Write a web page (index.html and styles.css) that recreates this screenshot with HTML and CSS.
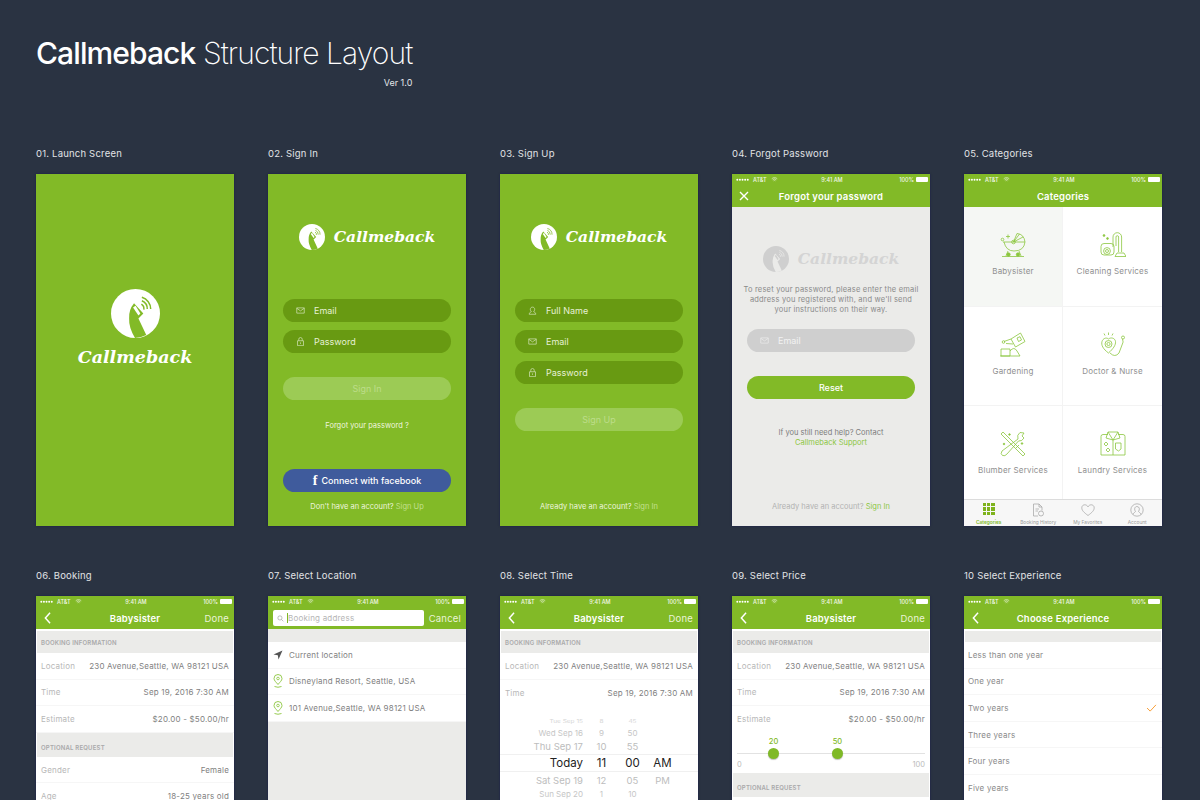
FILE: index.html
```html
<!DOCTYPE html>
<html lang="en">
<head>
  <meta charset="UTF-8" />
  <title>Callmeback Structure Layout</title>
  <link rel="stylesheet" href="styles.css">
</head>
<body>
  <svg class="sprites" width="0" height="0" aria-hidden="true">
    <symbol id="logo" viewBox="0 0 100 100">
      <circle cx="50" cy="50" r="50" fill="currentColor"/>
      <path class="cut" d="M47 29 L66 50 L56 60 L72 94 Q60 100 49 100 Q36 78 37 60 Q36 42 47 29Z"/>
      <path d="M45 38 L50 34 L60 50 L56 54Z" fill="currentColor"/>
      <path class="cut-line" d="M62 31 A11 11 0 0 1 67 42 M63 24 A18 18 0 0 1 74 41 M63 17 A25 25 0 0 1 81 41"/>
    </symbol>
    <symbol id="mail" viewBox="0 0 12 10">
      <path d="M1 1.5h10v7H1zM1 2l5 3.5L11 2" fill="none" stroke="currentColor" stroke-width=".9"/>
    </symbol>
    <symbol id="lock" viewBox="0 0 10 12">
      <path d="M1 5h8v6.500H1zM2.700 5V3a2.300 2.300 0 0 1 4.600 0v2M5 7.200v2" fill="none" stroke="currentColor" stroke-width=".9"/>
    </symbol>
    <symbol id="user" viewBox="0 0 12 12">
      <path d="M1.500 11c.5-2.500 2-3 3-3.500-2.500-2.500-1.500-6 1.500-6s4 3.500 1.500 6c1 .5 2.500 1 3 3.500z" fill="none" stroke="currentColor" stroke-width=".9"/>
    </symbol>
    <symbol id="back" viewBox="0 0 8 14">
      <path d="M7 1 L1.500 7 L7 13" fill="none" stroke="currentColor" stroke-width="1.700"/>
    </symbol>
    <symbol id="wifi" viewBox="0 0 12 9">
      <path d="M1 3.200a7 7 0 0 1 10 0M2.700 5a4.600 4.600 0 0 1 6.600 0M4.400 6.800a2.200 2.200 0 0 1 3.200 0" fill="none" stroke="currentColor" stroke-width="1"/>
    </symbol>
    <symbol id="pin" viewBox="0 0 10 14">
      <path d="M5 10.500C3 8 1 6.500 1 4.500a4 4 0 0 1 8 0C9 6.500 7 8 5 10.500zM1.500 12.500q3.500 1.500 7 0" fill="none" stroke="#8cc63f" stroke-width=".9"/>
      <circle cx="5" cy="4.500" r="1.300" fill="none" stroke="#8cc63f" stroke-width=".8"/>
    </symbol>
    <symbol id="status" viewBox="0 0 26 5">
      <g fill="currentColor"><circle cx="2" cy="2.500" r="1.500"/><circle cx="6" cy="2.500" r="1.500"/><circle cx="10" cy="2.500" r="1.500"/><circle cx="14" cy="2.500" r="1.500"/><circle cx="18" cy="2.500" r="1.500"/></g>
    </symbol>
  </svg>

  <header class="page-head">
    <div class="head-inner">
      <h1><b>Callmeback</b> Structure Layout</h1>
      <p class="version">Ver 1.0</p>
    </div>
  </header>

  <main class="board">
    <!-- row one -->
    <section class="item">
      <h2>01. Launch Screen</h2>
      <div class="screen green launch">
        <svg class="logo-big"><use href="#logo"/></svg>
        <div class="word word-big">Callmeback</div>
      </div>
    </section>

    <section class="item">
      <h2>02. Sign In</h2>
      <div class="screen green form">
        <div class="brand">
          <svg class="logo-small"><use href="#logo"/></svg>
          <div class="word">Callmeback</div>
        </div>
        <div class="pill field first"><svg class="ico"><use href="#mail"/></svg>Email</div>
        <div class="pill field"><svg class="ico"><use href="#lock"/></svg>Password</div>
        <div class="pill ghost">Sign In</div>
        <p class="forgot">Forgot your password ?</p>
        <div class="pill fb"><span class="fb-f">f</span>Connect with facebook</div>
        <p class="foot">Don't have an account? <span>Sign Up</span></p>
      </div>
    </section>

    <section class="item">
      <h2>03. Sign Up</h2>
      <div class="screen green form">
        <div class="brand">
          <svg class="logo-small"><use href="#logo"/></svg>
          <div class="word">Callmeback</div>
        </div>
        <div class="pill field first"><svg class="ico"><use href="#user"/></svg>Full Name</div>
        <div class="pill field"><svg class="ico"><use href="#mail"/></svg>Email</div>
        <div class="pill field"><svg class="ico"><use href="#lock"/></svg>Password</div>
        <div class="pill ghost ghost-up">Sign Up</div>
        <p class="foot foot-alone">Already have an account? <span>Sign In</span></p>
      </div>
    </section>

    <section class="item">
      <h2>04. Forgot Password</h2>
      <div class="screen app grey">
        <div class="bar">
          <div class="status">
            <span class="st-left"><svg class="dots"><use href="#status"/></svg>AT&amp;T<svg class="wifi"><use href="#wifi"/></svg></span>
            <span>9:41 AM</span>
            <span class="st-right">100%<i class="batt"></i></span>
          </div>
          <div class="nav">
            <svg class="close" viewBox="0 0 10 10"><path d="M1 1L9 9M9 1L1 9" stroke="#fff" stroke-width="1.400"/></svg>
            <span class="nav-title">Forgot your password</span>
            <span></span>
          </div>
        </div>
        <div class="forgot-body">
          <div class="brand brand-grey">
            <svg class="logo-small"><use href="#logo"/></svg>
            <div class="word">Callmeback</div>
          </div>
          <p class="reset-text">To reset your password, please enter the email address you registered with, and we'll send your instructions on their way.</p>
          <div class="pill field-grey"><svg class="ico"><use href="#mail"/></svg>Email</div>
          <div class="pill reset">Reset</div>
          <p class="help">If you still need help? Contact<br><span>Callmeback Support</span></p>
          <p class="foot foot-grey">Already have an account? <span>Sign In</span></p>
        </div>
      </div>
    </section>

    <section class="item">
      <h2>05. Categories</h2>
      <div class="screen app">
        <div class="bar">
          <div class="status">
            <span class="st-left"><svg class="dots"><use href="#status"/></svg>AT&amp;T<svg class="wifi"><use href="#wifi"/></svg></span>
            <span>9:41 AM</span>
            <span class="st-right">100%<i class="batt"></i></span>
          </div>
          <div class="nav">
            <span></span>
            <span class="nav-title">Categories</span>
            <span></span>
          </div>
        </div>
        <div class="cats">
          <div class="cat on">
            <svg class="cat-ico" viewBox="0 0 26 26"><path d="M13.500 10L17 1.500Q24 2 25 10zM13.500 10L19.500 2M13.500 10L23 5M3 10H13.500M25 10Q24 19 14 19Q6 19 4 10M8 19L6 24M19 19L21 24M2 24.500H24"/><circle cx="13.500" cy="10" r="1.800"/><circle cx="2.500" cy="7.500" r="1.300"/><path d="M8 2.500V6.500M6 4.500H10"/><circle class="solid" cx="8.500" cy="22.500" r="1.700"/><circle class="solid" cx="18" cy="22.500" r="1.700"/></svg>
            <span>Babysister</span>
          </div>
          <div class="cat">
            <svg class="cat-ico" viewBox="0 0 26 26"><rect x="1" y="11.500" width="13" height="11.500" rx="3"/><circle cx="7" cy="19" r="3.400"/><circle cx="7" cy="19" r="1.500"/><path d="M13 15V5a4.300 4.300 0 0 1 8.600 0V20M16 14V5a1.300 1.300 0 0 1 2.600 0V20M15 24.500H26L24 21H17z"/><circle class="solid" cx="4" cy="3.500" r=".9"/><circle class="solid" cx="7.500" cy="6.500" r=".9"/></svg>
            <span>Cleaning Services</span>
          </div>
          <div class="cat">
            <svg class="cat-ico" viewBox="0 0 26 26"><path d="M11 7L20.500 1L25 9.500L15.500 15zM17 6L20 4.700L21.500 8L18.500 9.500zM11 7L4 9.500M13 12L6 11.500M1 17H10V24H1zM10 19Q14 14 17 19L20 24H0"/><circle cx="3.500" cy="10" r="1.300"/></svg>
            <span>Gardening</span>
          </div>
          <div class="cat">
            <svg class="cat-ico" viewBox="0 0 26 26"><path d="M8.500 21C3 17 1 13 2 9.500C3 6.500 6 5 8.500 7C11 5 15 6 15.500 9.500C16 13 13 17 8.500 21zM10 21Q15 26 19 21L22 13Q24 10 22.500 7M4 1.500L5 3.500M8.500 .5V3M13 1.500L12 3.500"/><circle cx="8.500" cy="12" r="3.500"/><circle cx="8.500" cy="12" r="1.600"/><circle cx="23" cy="5.500" r="1.500"/></svg>
            <span>Doctor &amp; Nurse</span>
          </div>
          <div class="cat">
            <svg class="cat-ico" viewBox="0 0 26 26"><path d="M1 3L3 1L21 19L25 23L23 25L19 21zM16 17L19 14M24 2L20 1.500Q16.500 4 18 8L2 20Q0 23 2.500 24.500Q5 25.500 7 23L18.500 10Q22 10.500 24 7L22 5z"/><circle class="solid" cx="9.500" cy="3.500" r=".8"/><circle class="solid" cx="22" cy="12.500" r=".8"/><circle class="solid" cx="4" cy="13" r=".8"/></svg>
            <span>Blumber Services</span>
          </div>
          <div class="cat">
            <svg class="cat-ico" viewBox="0 0 26 26"><path d="M8 3.500H3Q1 3.500 1 5.500V24H25V5.500Q25 3.500 23 3.500H18M13 9V24M8 1H18L13 9zM8 1L6 7L13 9M18 1L20 7L13 9M15.500 12H21V18L18.500 20L15.500 18zM6 11L8 13L6 15L4 13zM8 17L10 19L8 21L6 19z"/></svg>
            <span>Laundry Services</span>
          </div>
        </div>
        <nav class="tabs">
          <div class="tab active">
            <div class="tile-grid"><i></i><i></i><i></i><i></i><i></i><i></i><i></i><i></i><i></i></div>
            <span>Categories</span>
          </div>
          <div class="tab">
            <svg class="tab-ico" viewBox="0 0 14 14"><path d="M2.500 1H8L11 4V7.500M8 1V4H11M7 13H2.500V1M4.500 6H8M4.500 8H7"/><circle cx="10" cy="10.500" r="2.500"/></svg>
            <span>Booking History</span>
          </div>
          <div class="tab">
            <svg class="tab-ico" viewBox="0 0 14 14"><path d="M7 12.500C3 9.500 .8 7.500 .8 4.800C.8 2.800 2.300 1.800 3.800 1.800C5.200 1.800 6.400 2.600 7 3.800C7.600 2.600 8.800 1.800 10.200 1.800C11.700 1.800 13.200 2.800 13.200 4.800C13.200 7.500 11 9.500 7 12.500z"/></svg>
            <span>My Favorites</span>
          </div>
          <div class="tab">
            <svg class="tab-ico" viewBox="0 0 14 14"><circle cx="7" cy="7" r="6.200"/><path d="M3 11.500C3.500 9.500 5 9.500 5.500 8.500C4 6.500 4.500 3.500 7 3.500S10 6.500 8.500 8.500C9 9.500 10.500 9.500 11 11.500"/></svg>
            <span>Account</span>
          </div>
        </nav>
      </div>
    </section>

    <!-- row two -->
    <section class="item">
      <h2>06. Booking</h2>
      <div class="screen app">
        <div class="bar">
          <div class="status">
            <span class="st-left"><svg class="dots"><use href="#status"/></svg>AT&amp;T<svg class="wifi"><use href="#wifi"/></svg></span>
            <span>9:41 AM</span>
            <span class="st-right">100%<i class="batt"></i></span>
          </div>
          <div class="nav">
            <svg class="back"><use href="#back"/></svg>
            <span class="nav-title">Babysister</span>
            <span class="nav-action">Done</span>
          </div>
        </div>
        <div class="sec">BOOKING INFORMATION</div>
        <div class="row"><span>Location</span><b>230 Avenue,Seattle, WA 98121 USA</b></div>
        <div class="row"><span>Time</span><b>Sep 19, 2016 7:30 AM</b></div>
        <div class="row"><span>Estimate</span><b>$20.00 - $50.00/hr</b></div>
        <div class="sec sec-low">OPTIONAL REQUEST</div>
        <div class="row"><span>Gender</span><b>Female</b></div>
        <div class="row"><span>Age</span><b>18-25 years old</b></div>
      </div>
    </section>

    <section class="item">
      <h2>07. Select Location</h2>
      <div class="screen app grey">
        <div class="bar">
          <div class="status">
            <span class="st-left"><svg class="dots"><use href="#status"/></svg>AT&amp;T<svg class="wifi"><use href="#wifi"/></svg></span>
            <span>9:41 AM</span>
            <span class="st-right">100%<i class="batt"></i></span>
          </div>
          <div class="nav nav-search">
            <div class="search">
              <svg class="search-ico" viewBox="0 0 10 10"><circle cx="4.200" cy="4.200" r="3"/><path d="M6.500 6.500L9 9"/></svg>
              <i class="caret"></i>Booking address
            </div>
            <span class="nav-action">Cancel</span>
          </div>
        </div>
        <div class="gap"></div>
        <div class="list">
          <div class="loc"><svg class="loc-ico arrow" viewBox="0 0 10 10"><path d="M9.500 .5L.5 4.500L4.800 5.300L5.500 9.500z"/></svg>Current location</div>
          <div class="loc"><svg class="loc-ico"><use href="#pin"/></svg>Disneyland Resort, Seattle, USA</div>
          <div class="loc"><svg class="loc-ico"><use href="#pin"/></svg>101 Avenue,Seattle, WA 98121 USA</div>
        </div>
      </div>
    </section>

    <section class="item">
      <h2>08. Select Time</h2>
      <div class="screen app">
        <div class="bar">
          <div class="status">
            <span class="st-left"><svg class="dots"><use href="#status"/></svg>AT&amp;T<svg class="wifi"><use href="#wifi"/></svg></span>
            <span>9:41 AM</span>
            <span class="st-right">100%<i class="batt"></i></span>
          </div>
          <div class="nav">
            <svg class="back"><use href="#back"/></svg>
            <span class="nav-title">Babysister</span>
            <span class="nav-action">Done</span>
          </div>
        </div>
        <div class="sec">BOOKING INFORMATION</div>
        <div class="row"><span>Location</span><b>230 Avenue,Seattle, WA 98121 USA</b></div>
        <div class="row row-last"><span>Time</span><b>Sep 19, 2016 7:30 AM</b></div>
        <div class="picker">
          <div class="pick p1"><span>Tue Sep 15</span><span>8</span><span>45</span><span></span></div>
          <div class="pick p2"><span>Wed Sep 16</span><span>9</span><span>50</span><span></span></div>
          <div class="pick p3"><span>Thu Sep 17</span><span>10</span><span>55</span><span></span></div>
          <div class="pick p4"><span>Today</span><span>11</span><span>00</span><span>AM</span></div>
          <div class="pick p3"><span>Sat Sep 19</span><span>12</span><span>05</span><span>PM</span></div>
          <div class="pick p5"><span>Sun Sep 20</span><span>1</span><span>10</span><span></span></div>
        </div>
      </div>
    </section>

    <section class="item">
      <h2>09. Select Price</h2>
      <div class="screen app">
        <div class="bar">
          <div class="status">
            <span class="st-left"><svg class="dots"><use href="#status"/></svg>AT&amp;T<svg class="wifi"><use href="#wifi"/></svg></span>
            <span>9:41 AM</span>
            <span class="st-right">100%<i class="batt"></i></span>
          </div>
          <div class="nav">
            <svg class="back"><use href="#back"/></svg>
            <span class="nav-title">Babysister</span>
            <span class="nav-action">Done</span>
          </div>
        </div>
        <div class="sec">BOOKING INFORMATION</div>
        <div class="row"><span>Location</span><b>230 Avenue,Seattle, WA 98121 USA</b></div>
        <div class="row"><span>Time</span><b>Sep 19, 2016 7:30 AM</b></div>
        <div class="row row-last"><span>Estimate</span><b>$20.00 - $50.00/hr</b></div>
        <div class="slider">
          <div class="track">
            <div class="knob" style="left: 16.500%"><span>20</span></div>
            <div class="knob" style="left: 50.500%"><span>50</span></div>
          </div>
          <div class="ends"><span>0</span><span>100</span></div>
        </div>
        <div class="sec sec-low">OPTIONAL REQUEST</div>
      </div>
    </section>

    <section class="item">
      <h2>10 Select Experience</h2>
      <div class="screen app">
        <div class="bar">
          <div class="status">
            <span class="st-left"><svg class="dots"><use href="#status"/></svg>AT&amp;T<svg class="wifi"><use href="#wifi"/></svg></span>
            <span>9:41 AM</span>
            <span class="st-right">100%<i class="batt"></i></span>
          </div>
          <div class="nav">
            <svg class="back"><use href="#back"/></svg>
            <span class="nav-title">Choose Experience</span>
            <span></span>
          </div>
        </div>
        <div class="gap"></div>
        <div class="opt">Less than one year</div>
        <div class="opt">One year</div>
        <div class="opt">Two years<svg class="check" viewBox="0 0 12 9"><path d="M1 4.500L4.500 8L11 1" fill="none" stroke="#f7931e" stroke-width="1"/></svg></div>
        <div class="opt">Three years</div>
        <div class="opt">Four years</div>
        <div class="opt">Five years</div>
      </div>
    </section>
  </main>
</body>
</html>
```

FILE: styles.css
```css
* {
  box-sizing: border-box;
}
html, body {
  height: 800px;
  overflow: hidden;
}
body {
  margin: 0;
  background: #2a3342;
  font-family: Inter, 'Noto Sans', sans-serif;
  color: #fff;
}
.sprites {
  position: absolute;
}
.cut {
  fill: var(--cut, #82ba27);
}
.cut-line {
  fill: none;
  stroke: var(--cut, #82ba27);
  stroke-width: 3;
}

/* page header */
.page-head {
  padding: 35px 0 0 36px;
  height: 147px;
}
.head-inner {
  display: inline-block;
}
h1 {
  margin: 0;
  font-size: 30px;
  line-height: 36px;
  font-weight: 200;
  letter-spacing: -0.9px;
}
h1 b {
  font-weight: 500;
}
.version {
  margin: 6px 0 0;
  text-align: right;
  font-size: 9px;
  line-height: 12px;
  color: #e4e6e9;
}

/* board of screens */
.board {
  display: grid;
  grid-template-columns: repeat(5, 198px);
  column-gap: 34px;
  row-gap: 43px;
  padding-left: 36px;
}
.item h2 {
  margin: 0 0 14px;
  font-size: 9.500px;
  line-height: 13px;
  font-weight: 400;
  letter-spacing: 0.2px;
  color: #e1e3e6;
}
.screen {
  height: 352px;
  width: 198px;
  overflow: hidden;
  box-shadow: 0 0 2px rgba(20, 22, 80, 0.7);
  background: #fff;
  display: flex;
  flex-direction: column;
}
.green {
  background: #82ba27;
}
.grey {
  background: #ebebe9;
}

/* logo */
.launch {
  align-items: center;
  padding-top: 115px;
}
.logo-big {
  width: 49px;
  height: 49px;
  color: #fff;
}
.logo-small {
  width: 26px;
  height: 26px;
  color: #fff;
}
.word {
  font-family: 'DejaVu Serif', serif;
  font-style: italic;
  font-weight: 700;
  font-size: 15.500px;
  line-height: 20px;
  color: #fff;
}
.word-big {
  font-size: 17.500px;
  line-height: 22px;
  margin-top: 8px;
}
.brand {
  display: flex;
  align-items: center;
  justify-content: center;
  gap: 9px;
  margin-top: 49px;
  height: 27px;
}
.brand-grey {
  --cut: #ebebe9;
  margin-top: 38px;
}
.brand-grey .logo-small {
  color: #cfcfcf;
}
.brand-grey .word {
  color: #d4d4d4;
}

/* pills */
.form {
  padding: 0 15px 13px 15px;
}
.pill {
  height: 23px;
  border-radius: 12px;
  flex-shrink: 0;
  display: flex;
  align-items: center;
  font-size: 9px;
  font-weight: 400;
}
.field {
  background: #689a12;
  color: #e6f0d5;
  padding-left: 13px;
  margin-top: 8px;
}
.field.first {
  margin-top: 49px;
}
.ico {
  width: 9px;
  height: 9px;
  margin-right: 9px;
  opacity: 0.9;
}
.ghost {
  background: #9ccb55;
  color: #bcdd8a;
  justify-content: center;
  margin-top: 24px;
}
.ghost-up {
  margin-top: 24px;
  margin-top: 24px;
}
.forgot {
  margin: 20px 0 0;
  text-align: center;
  font-size: 7.500px;
  line-height: 12px;
  color: #eef5df;
}
.fb {
  background: #3f5b9c;
  color: #fff;
  justify-content: center;
  margin-top: auto;
  font-weight: 500;
  font-size: 9px;
}
.fb-f {
  font-family: 'Liberation Serif', serif;
  font-weight: 700;
  font-size: 14px;
  margin-right: 4px;
}
.foot {
  margin: 9px 0 0;
  text-align: center;
  font-size: 7.500px;
  line-height: 12px;
  color: #eef5df;
}
.foot span {
  color: #c2e08f;
}
.foot-alone {
  margin-top: auto;
}

/* app chrome */
.bar {
  background: #82ba27;
  height: 33px;
  flex-shrink: 0;
}
.status {
  display: grid;
  grid-template-columns: 1fr auto 1fr;
  align-items: center;
  height: 11px;
  padding: 0 2px 0 4px;
  font-size: 5.500px;
  font-weight: 500;
  color: #f2f7e8;
}
.st-left {
  display: flex;
  align-items: center;
}
.st-right {
  display: flex;
  align-items: center;
  justify-content: flex-end;
  gap: 2px;
}
.dots {
  width: 17px;
  height: 3.500px;
  color: #fff;
}
.wifi {
  width: 7px;
  height: 5px;
  margin-left: 4px;
  color: #fff;
}
.batt {
  display: block;
  width: 12px;
  height: 4.500px;
  background: #fff;
  border-radius: 1px;
}
.nav {
  display: grid;
  grid-template-columns: 1fr auto 1fr;
  align-items: center;
  height: 22px;
  padding: 0 5px;
}
.nav-title {
  font-size: 9.500px;
  font-weight: 600;
  letter-spacing: 0.2px;
  text-align: center;
}
.nav-action {
  font-size: 9.500px;
  text-align: right;
  color: #eaf4d8;
  letter-spacing: 0.2px;
}
.back {
  width: 7px;
  height: 12px;
  margin-left: 3px;
  color: #fff;
}
.close {
  width: 10px;
  height: 10px;
  margin-left: 2px;
}

/* forgot password */
.forgot-body {
  flex: 1;
  display: flex;
  flex-direction: column;
  padding: 0 15px 13px;
}
.reset-text {
  margin: 13px -6px 0;
  text-align: center;
  font-size: 7.500px;
  line-height: 9.800px;
  letter-spacing: 0.2px;
  color: #8a8a8a;
}
.field-grey {
  background: #cfcfcf;
  color: #f2f2f2;
  margin-top: 15px;
  padding-left: 13px;
}
.reset {
  background: #82ba27;
  justify-content: center;
  margin-top: 24px;
  font-weight: 500;
}
.help {
  margin: 29px 0 0;
  text-align: center;
  font-size: 7.500px;
  line-height: 10px;
  color: #7c7c7c;
}
.help span {
  color: #8cc63f;
}
.foot-grey {
  margin-top: auto;
  color: #b2b2b2;
}
.foot-grey span {
  color: #8cc63f;
}

/* categories */
.cats {
  flex: 1;
  display: grid;
  grid-template-columns: 1fr 1fr;
  grid-template-rows: 100px 99px 93px;
}
.cat {
  display: flex;
  flex-direction: column;
  align-items: center;
  padding-top: 25px;
  font-size: 8px;
  letter-spacing: 0.2px;
  color: #8f8f8f;
  border-bottom: 1px solid #f3f3f3;
}
.cat:nth-child(odd) {
  border-right: 1px solid #f3f3f3;
}
.cat:nth-child(n+5) {
  border-bottom: none;
}
.cat.on {
  background: #f5f7f4;
}
.cat-ico {
  width: 26px;
  height: 26px;
  margin-bottom: 8px;
  fill: none;
  stroke: #8cc63f;
  stroke-width: 0.8;
}
.cat-ico .solid {
  fill: #8cc63f;
}
.tabs {
  height: 27px;
  display: grid;
  grid-template-columns: repeat(4, 1fr);
  background: #f7f7f7;
  border-top: 1px solid #dcdcdc;
}
.tab {
  display: flex;
  flex-direction: column;
  align-items: center;
  padding-top: 3px;
  font-size: 4.800px;
  color: #9a9a9a;
}
.tab.active {
  color: #7fb927;
  font-weight: 600;
}
.tile-grid {
  display: grid;
  grid-template-columns: repeat(3, 3.400px);
  grid-auto-rows: 3.400px;
  gap: 1px;
  height: 14px;
  margin-bottom: 2px;
}
.tile-grid i {
  background: #7fb31d;
}
.tab-ico {
  width: 14px;
  height: 14px;
  margin-bottom: 2px;
  fill: none;
  stroke: #a0a0a0;
  stroke-width: 0.7;
}

/* form rows */
.sec {
  flex-shrink: 0;
  height: 22px;
  margin: 2px 1px 0;
  padding: 1px 4px 0;
  background: #ebebe9;
  color: #a9a9a9;
  font-size: 6px;
  font-weight: 600;
  letter-spacing: 0.2px;
  display: flex;
  align-items: center;
}
.sec-low {
  margin-top: 0;
  height: 24px;
  padding-top: 5px;
}
.row {
  flex-shrink: 0;
  height: 26.600px;
  padding: 0 5px;
  display: flex;
  align-items: center;
  justify-content: space-between;
  border-bottom: 1px solid #f6f6f6;
  font-size: 8px;
  letter-spacing: 0.2px;
  color: #b7b7b7;
}
.row b {
  font-weight: 400;
  color: #7f7f7f;
}
.row-last {
  border-bottom: none;
}

/* location list */
.gap {
  flex-shrink: 0;
  height: 11px;
  margin: 2px 1px 0;
  background: #ebebe9;
}
.list {
  background: #fff;
  flex-shrink: 0;
}
.loc {
  height: 26.600px;
  padding-left: 5px;
  display: flex;
  align-items: center;
  font-size: 8px;
  letter-spacing: 0.2px;
  color: #7f7f7f;
  border-bottom: 1px solid #f6f6f6;
}
.loc-ico {
  width: 10px;
  height: 14px;
  margin-right: 6px;
}
.arrow {
  height: 10px;
  fill: #555;
}
.nav-search {
  grid-template-columns: 1fr auto;
  gap: 5px;
  padding-right: 5px;
}
.search {
  height: 16px;
  background: #fff;
  border-radius: 2px;
  display: flex;
  align-items: center;
  font-size: 8px;
  letter-spacing: 0.2px;
  color: #b5b5b5;
  padding-left: 4px;
}
.search-ico {
  width: 7px;
  height: 7px;
  margin-right: 3px;
  fill: none;
  stroke: #999;
  stroke-width: 0.9;
}
.caret {
  width: 1px;
  height: 10px;
  background: #7fb927;
}

/* time picker */
.picker {
  padding-top: 11px;
}
.pick {
  display: grid;
  grid-template-columns: 83px 37px 25px 35px;
  align-items: center;
  text-align: center;
  color: #bdbdbd;
}
.pick span:first-child {
  text-align: right;
  white-space: nowrap;
}
.p1 {
  height: 10px;
  font-size: 6.500px;
  transform: scaleY(0.7);
  color: #d6d6d6;
}
.p2 {
  height: 11px;
  font-size: 8px;
  color: #c6c6c6;
}
.p3 {
  height: 16px;
  font-size: 9.500px;
}
.p4 {
  height: 18px;
  font-size: 11.500px;
  color: #222;
  border-top: 1px solid #f0f0f0;
  border-bottom: 1px solid #f0f0f0;
}
.p5 {
  height: 12px;
  font-size: 8px;
  color: #c6c6c6;
}

/* price slider */
.slider {
  flex-shrink: 0;
  height: 40px;
  padding: 20px 5px 0;
}
.track {
  position: relative;
  height: 1px;
  background: #e2e2e2;
}
.knob {
  position: absolute;
  top: -5px;
  width: 11px;
  height: 11px;
  border-radius: 50%;
  background: #7fb927;
  box-shadow: 0 1px 1px rgba(0, 0, 0, 0.25);
}
.knob span {
  position: absolute;
  left: -4px;
  right: -4px;
  top: -11px;
  text-align: center;
  font-size: 7.500px;
  color: #7fb927;
  font-weight: 500;
}
.ends {
  display: flex;
  justify-content: space-between;
  margin-top: 6px;
  font-size: 7.500px;
  line-height: 10px;
  color: #bbb;
}

/* experience list */
.opt {
  flex-shrink: 0;
  height: 26.600px;
  padding: 0 5px 0 4px;
  display: flex;
  align-items: center;
  justify-content: space-between;
  font-size: 8px;
  letter-spacing: 0.2px;
  color: #8a8a8a;
  border-bottom: 1px solid #f6f6f6;
}
.check {
  width: 11px;
  height: 8px;
}
```
